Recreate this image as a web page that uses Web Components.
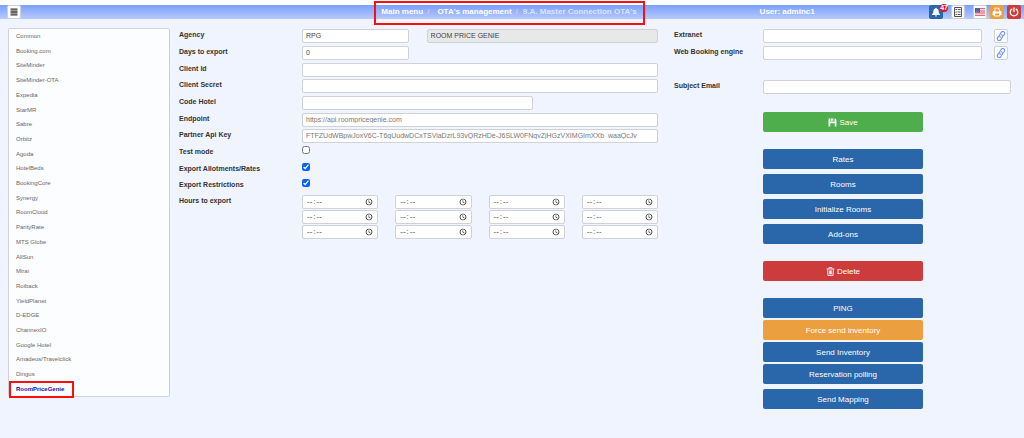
<!DOCTYPE html>
<html lang="en">
<head>
<meta charset="utf-8">
<meta name="viewport" content="width=device-width, initial-scale=1">
<title>Master Connection OTA's</title>
<style>
  body {
    margin: 0;
    font-family: "Liberation Sans", Arial, sans-serif;
    font-size: 7px;
    color: #333;
    --blue: #2a66aa;
    --green: #4eae4c;
    --red: #cd3c3d;
    --orange: #eb9f3f;
    --line: #d0d2d8;
    --mark: #fb1010;
  }
</style>
</head>
<body>
<ota-page></ota-page>

<script>
(function () {
  function define(name, html, setup) {
    const template = document.createElement("template");
    template.innerHTML = html;

    window.customElements.define(
      name,
      class extends HTMLElement {
        constructor() {
          super();
          this.attachShadow({ mode: "open" });
          this.shadowRoot.appendChild(template.content.cloneNode(true));
        }

        connectedCallback() {
          if (setup && !this.ready) {
            this.ready = true;
            setup(this, this.shadowRoot);
          }
        }
      }
    );
  }

  const icons = {
    menu: '<path d="M1 1h14v2.500H1zM1 4.800h14v2.500H1zM1 8.700h14v2.500H1zM1 12.500h14V15H1z"/>',
    bell: '<path d="M8 1c.8 0 1.2.5 1.2 1.2 2 .6 3 2.200 3 4.300 0 3 .8 4.200 2.300 5.500v.8h-13V12c1.500-1.300 2.300-2.500 2.300-5.500 0-2.100 1-3.700 3-4.300C6.800 1.500 7.200 1 8 1zM6.300 13.500h3.400c0 1-.7 1.500-1.700 1.500s-1.700-.5-1.700-1.500z"/>',
    tasks: '<path fill="none" stroke="currentColor" stroke-width="1.400" d="M2.500 .8h11v14.400h-11zM7.500 4H12M7.500 8H12M7.500 12H12M4 4l.8.8L6.300 3M4 8l.8.8L6.300 7M4 12l.8.8L6.300 11"/>',
    flag: '<path fill="#fff" d="M0 2h16v12H0z"/><path fill="#dd3d4c" d="M0 2h16v1.700H0zM0 5.400h16v1.700H0zM0 8.800h16v1.700H0zM0 12.200h16V14H0z"/><path fill="#3d509d" d="M0 2h8v6.800H0z"/><path fill="#c5cce8" d="M1.500 3.500h1v1h-1zM4.500 3.500h1v1h-1zM3 5h1v1H3zM6 5h1v1H6zM1.500 6.500h1v1h-1zM4.500 6.500h1v1h-1z"/>',
    print: '<path fill-rule="evenodd" d="M4 1h6.500L12.500 3v3.500h1c1 0 1.500.6 1.500 1.500v5h-2.500v2h-9v-2H1V8c0-.9.500-1.500 1.500-1.500H4zM5.300 2.300v4.700h6V4H9.500V2.300zM4.800 10.500v3.200h6.400v-3.200z"/>',
    power: '<path fill="none" stroke="currentColor" stroke-width="2" stroke-linecap="round" d="M8 1.500v6M4.500 3.400a6 6 0 1 0 7 0"/>',
    link: '<g fill="none" stroke="currentColor" stroke-width="1.800" stroke-linecap="round" transform="rotate(-10 8 8)"><path d="M7 9.800C5.400 8.700 5.500 6.700 6.600 5.400l2.700-3c1.300-1.400 3.200-1.400 4.400-.3s1.300 3 .1 4.300L12 8.400"/><path d="M9 6.200c1.600 1.100 1.500 3.100.4 4.400l-2.700 3c-1.300 1.400-3.200 1.400-4.400.3s-1.300-3-.1-4.300L4 7.600"/></g>',
    save: '<path fill-rule="evenodd" d="M1 1h3v5h8V1h1l2 2v12h-3V9.500H4V15H1zM5 1h3.500v4H5zM10 1h1v4h-1z"/>',
    trash: '<path fill="none" stroke="currentColor" stroke-width="1.500" d="M1 3.500h14M5.500 3.500V1h5v2.500M2.800 4l.7 11.200h9L13.200 4M6 6v7M8 6v7M10 6v7"/>'
  };

  // <ui-icon name="..."> takes its size from font-size
  define(
    "ui-icon",
    `
    <style>
      :host { display: inline-flex; width: 1em; height: 1em; }
      svg { width: 100%; height: 100%; fill: currentColor; }
    </style>
    <svg viewBox="0 0 16 16" aria-hidden="true"></svg>
    `,
    (host, root) => {
      root.querySelector("svg").innerHTML = icons[host.getAttribute("name")];
    }
  );

  // Small square button, used in the top bar and next to the URL fields
  define(
    "icon-button",
    `
    <style>
      :host { display: block; position: relative; flex: none; }
      button {
        display: flex;
        align-items: center;
        justify-content: center;
        width: 14px;
        height: 14px;
        padding: 0;
        border: 1px solid var(--edge, #ccd0d8);
        border-radius: 2px;
        background: var(--fill, #fff);
        color: var(--ink, #333);
        font-size: var(--icon, 10px);
      }
      /* Notification counter over the corner */
      ::slotted(span) {
        position: absolute;
        top: -1px;
        right: -5px;
        border-radius: 4px;
        background: #e3131d;
        color: #fff;
        font-size: 7px;
        font-weight: bold;
        line-height: 8px;
      }
    </style>
    <button type="button"></button>
    <slot></slot>
    `,
    (host, root) => {
      const button = root.querySelector("button");
      const icon = document.createElement("ui-icon");
      icon.setAttribute("name", host.getAttribute("icon"));
      button.setAttribute("aria-label", host.getAttribute("label"));
      button.appendChild(icon);
    }
  );

  define(
    "top-bar",
    `
    <style>
      :host {
        display: grid;
        grid-template-columns: minmax(0, 374fr) auto minmax(0, 384fr);
        align-items: center;
        height: 14px;
        margin-top: 5px;
        padding: 0 3px 0 7px;
        background: linear-gradient(#7a9fff, #b6caff);
        color: #fff;
        font-size: 8px;
        font-weight: bold;
        line-height: 14px;
        white-space: nowrap;
      }
      nav { position: relative; }
      /* Highlight frame round the breadcrumb */
      nav::after {
        content: "";
        position: absolute;
        inset: -4px -8px -6px -7px;
        border: 2px solid var(--mark);
        pointer-events: none;
      }
      ol { display: flex; margin: 0; padding: 0; list-style: none; }
      li + li::before {
        content: "/";
        padding: 0 5px 0 4px;
        color: #d2ccc8;
      }
      a { color: inherit; text-decoration: none; }
      li:nth-child(2) a { padding-left: 3px; }
      [aria-current] { color: #dbe5ff; }
      .right { display: flex; justify-content: space-between; padding-left: 32%; }
      .tools { display: flex; gap: 3px; }
      .menu { --icon: 8px; }
      .wide { margin-right: 5px; }
      .blue { --fill: var(--blue); --edge: var(--blue); --ink: #fff; }
      .orange { --fill: var(--orange); --edge: var(--orange); --ink: #fff; }
      .red { --fill: var(--red); --edge: var(--red); --ink: #fff; }
    </style>
    <icon-button class="menu" icon="menu" label="Menu"></icon-button>
    <nav aria-label="Breadcrumb">
      <ol>
        <li><a href="#main">Main menu</a></li>
        <li><a href="#otas">OTA's management</a></li>
        <li><a href="#master" aria-current="page">9.A. Master Connection OTA's</a></li>
      </ol>
    </nav>
    <div class="right">
      <span>User: adminc1</span>
      <div class="tools">
        <icon-button class="blue wide" icon="bell" label="Notifications"><span>47</span></icon-button>
        <icon-button class="wide" icon="tasks" label="Tasks"></icon-button>
        <icon-button icon="flag" label="Language"></icon-button>
        <icon-button class="orange" icon="print" label="Print"></icon-button>
        <icon-button class="red" icon="power" label="Log out"></icon-button>
      </div>
    </div>
    `
  );

  define(
    "channel-list",
    `
    <style>
      :host {
        display: flex;
        flex-direction: column;
        justify-content: space-between;
        border: 1px solid var(--line);
        border-radius: 2px;
        background: #fcfdff;
        font-size: 6px;
        line-height: 14px;
      }
      ::slotted(a) {
        position: relative;
        align-self: flex-start;
        padding: 0 7px;
        color: #666;
        text-decoration: none;
      }
      ::slotted(a[aria-current]) { color: #1a0dab; font-weight: bold; }
      ::slotted(a[aria-current])::after {
        content: "";
        position: absolute;
        inset: -1px -3px -2px 0;
        border: 2px solid var(--mark);
      }
    </style>
    <slot></slot>
    `
  );

  const inputStyle = `
      input {
        box-sizing: border-box;
        width: 100%;
        min-width: 0;
        height: 14px;
        margin: 0;
        padding: 0 3px 1px;
        border: 1px solid var(--line);
        border-radius: 2px;
        background: #fff;
        color: #444;
        font: inherit;
        font-size: 7px;
        line-height: 11px;
      }
  `;

  // Label and text box. Attributes: label, value, size (short | medium), muted
  define(
    "text-field",
    `
    <style>
      :host { display: grid; grid-template-columns: var(--label) minmax(0, 1fr); align-items: start; }
      label { font-weight: bold; line-height: 12px; }
      .body { display: flex; }
      ${inputStyle}
      :host([size="short"]) input { width: 30%; }
      :host([size="medium"]) input { width: 65%; }
      :host([muted]) input { color: #777; }
      ::slotted(icon-button) { margin: 0 3px 0 12px; --ink: #6d95f8; }
      ::slotted(read-only) { width: 65%; margin-left: auto; }
    </style>
    <label for="box"></label>
    <div class="body"><input id="box" type="text"><slot></slot></div>
    `,
    (host, root) => {
      root.querySelector("label").textContent = host.getAttribute("label");
      root.querySelector("input").value = host.getAttribute("value") || "";
    }
  );

  define(
    "read-only",
    `
    <style>
      :host { display: block; }
      ${inputStyle}
      input { background: #e8e8e8; }
    </style>
    <input type="text" readonly>
    `,
    (host, root) => {
      const input = root.querySelector("input");
      input.setAttribute("aria-label", host.getAttribute("label"));
      input.value = host.getAttribute("value");
    }
  );

  define(
    "check-field",
    `
    <style>
      :host { display: grid; grid-template-columns: var(--label) minmax(0, 1fr); align-items: start; }
      label { font-weight: bold; line-height: 12px; }
      input { width: 8px; height: 8px; margin: 0; accent-color: #0b61ff; }
    </style>
    <label for="box"></label>
    <input id="box" type="checkbox">
    `,
    (host, root) => {
      root.querySelector("label").textContent = host.getAttribute("label");
      root.querySelector("input").checked = host.hasAttribute("checked");
    }
  );

  define(
    "hours-field",
    `
    <style>
      :host { display: block; }
      fieldset {
        display: grid;
        grid-template-columns: var(--label) minmax(0, 1fr);
        margin: 0;
        padding: 0;
        border: 0;
      }
      legend { float: left; padding: 0; font-weight: bold; line-height: 12px; }
      .times { display: grid; grid-template-columns: repeat(4, minmax(0, 1fr)); gap: 1px 17px; }
      ${inputStyle}
      input::-webkit-datetime-edit-ampm-field { display: none; }
      input::-webkit-datetime-edit { padding: 0; font-size: 8px; line-height: 10px; }
      input::-webkit-calendar-picker-indicator { width: 8px; height: 8px; margin: 0 1px 0 0; padding: 0; background-size: 8px; }
    </style>
    <fieldset>
      <legend>Hours to export</legend>
      <div class="times"></div>
    </fieldset>
    `,
    (host, root) => {
      const times = root.querySelector(".times");
      for (let i = 1; i <= 12; i++) {
        const input = document.createElement("input");
        input.type = "time";
        input.setAttribute("aria-label", "Hour " + i);
        times.appendChild(input);
      }
    }
  );

  define(
    "action-button",
    `
    <style>
      :host { display: block; --fill: var(--blue); }
      :host([kind="save"]) { --fill: var(--green); }
      :host([kind="delete"]) { --fill: var(--red); }
      :host([kind="warn"]) { --fill: var(--orange); }
      button {
        display: flex;
        align-items: center;
        justify-content: center;
        gap: 2px;
        width: 100%;
        height: 20px;
        padding: 0;
        border: 0;
        border-radius: 2px;
        background: var(--fill);
        color: #fff;
        font: inherit;
        font-size: 8px;
      }
    </style>
    <button type="button"><slot></slot></button>
    `
  );

  define(
    "ota-page",
    `
    <style>
      :host { display: flex; flex-direction: column; min-height: 100vh; }
      main {
        flex: 1;
        display: grid;
        grid-template-columns: 162px minmax(0, 479fr) minmax(0, 344fr);
        gap: 9px;
        align-content: start;
        padding: 9px 13px 9px 8px;
        background: #f0f4ff;
      }
      channel-list { margin-bottom: 12px; }
      form { padding-top: 1px; }
      .export {
        --label: 123px;
        display: grid;
        grid-template-rows: repeat(3, 17px 17px 16px) 16px;
        grid-auto-rows: auto;
        align-content: start;
      }
      .access { --label: 89px; padding-left: 7px; }
      .access text-field { height: 17px; }
      .subject { margin-top: 17px; }
      .actions {
        display: grid;
        gap: 17px;
        width: 65%;
        max-width: 160px;
        margin: 15px 0 0 var(--label);
      }
      .actions ui-icon { font-size: 9px; }
      .group { display: grid; gap: 5px; }
      .tight { gap: 2px; }
    </style>
    <top-bar></top-bar>
    <main>
      <channel-list role="navigation" aria-label="Channels"></channel-list>
      <form class="export">
        <text-field label="Agency" value="RPG" size="short">
          <read-only label="Agency name" value="ROOM PRICE GENIE"></read-only>
        </text-field>
        <text-field label="Days to export" value="0" size="short"></text-field>
        <text-field label="Client Id"></text-field>
        <text-field label="Client Secret"></text-field>
        <text-field label="Code Hotel" size="medium"></text-field>
        <text-field label="Endpoint" value="https://api.roompricegenie.com" muted></text-field>
        <text-field label="Partner Api Key" value="FTFZUdWBpwJoxV6C-T6gUudwDCxTSViaDzrL93vQRzHDe-J6SLW0FNgvZjHGzVXIMGImXXb_waaQcJv" muted></text-field>
        <check-field label="Test mode"></check-field>
        <check-field label="Export Allotments/Rates" checked></check-field>
        <check-field label="Export Restrictions" checked></check-field>
        <hours-field></hours-field>
      </form>
      <form class="access">
        <text-field label="Extranet"><icon-button icon="link" label="Open extranet"></icon-button></text-field>
        <text-field label="Web Booking engine"><icon-button icon="link" label="Open booking engine"></icon-button></text-field>
        <text-field class="subject" label="Subject Email"></text-field>
        <div class="actions">
          <action-button kind="save"><ui-icon name="save"></ui-icon>Save</action-button>
          <div class="group">
            <action-button>Rates</action-button>
            <action-button>Rooms</action-button>
            <action-button>Initialize Rooms</action-button>
            <action-button>Add-ons</action-button>
          </div>
          <action-button kind="delete"><ui-icon name="trash"></ui-icon>Delete</action-button>
          <div class="group">
            <div class="group tight">
              <action-button>PING</action-button>
              <action-button kind="warn">Force send inventory</action-button>
              <action-button>Send Inventory</action-button>
              <action-button>Reservation polling</action-button>
            </div>
            <action-button>Send Mapping</action-button>
          </div>
        </div>
      </form>
    </main>
    `,
    (host, root) => {
      const channels = [
        "Common", "Booking.com", "SiteMinder", "SiteMinder-OTA", "Expedia",
        "StarMR", "Sabre", "Orbitz", "Agoda", "HotelBeds", "BookingCore",
        "Synergy", "RoomCloud", "ParityRate", "MTS Globe", "AllSun", "Mirai",
        "Roiback", "YieldPlanet", "D-EDGE", "ChannexIO", "Google Hotel",
        "Amadeus/Travelclick", "Dingus", "RoomPriceGenie"
      ];
      const list = root.querySelector("channel-list");
      channels.forEach((name) => {
        const link = document.createElement("a");
        link.href = "#" + name;
        link.textContent = name;
        if (name === "RoomPriceGenie") link.setAttribute("aria-current", "page");
        list.appendChild(link);
      });
    }
  );
})();
</script>
</body>
</html>
